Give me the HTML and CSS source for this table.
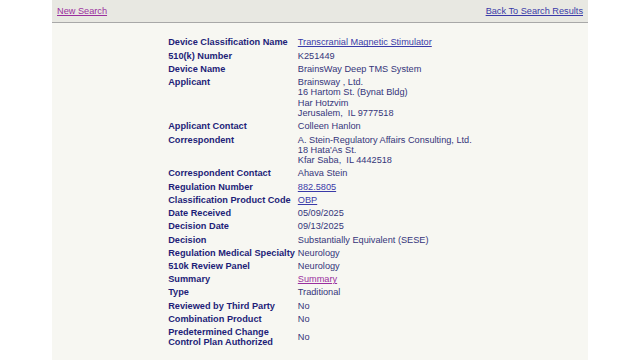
FILE: index.html
```html
<!DOCTYPE html>
<html lang="en">
<head>
  <meta charset="UTF-8" />
  <meta name="viewport" content="width=device-width, initial-scale=1.0"/>
  <title>510(k) Premarket Notification</title>
  <link rel="stylesheet" href="styles.css">
</head>
<body>
  <div class="page">
    <div class="topbar">
      <a class="visited" href="#">New Search</a>
      <a href="#">Back To Search Results</a>
    </div>

    <table class="details">
      <tr><th>Device Classification Name</th><td><a href="#">Transcranial Magnetic Stimulator</a></td></tr>
      <tr><th>510(k) Number</th><td>K251449</td></tr>
      <tr><th>Device Name</th><td>BrainsWay Deep TMS System</td></tr>
      <tr><th>Applicant</th><td>Brainsway , Ltd.<br>16 Hartom St. (Bynat Bldg)<br>Har Hotzvim<br>Jerusalem,&nbsp; IL 9777518</td></tr>
      <tr><th>Applicant Contact</th><td>Colleen Hanlon</td></tr>
      <tr><th>Correspondent</th><td>A. Stein-Regulatory Affairs Consulting, Ltd.<br>18 Hata'As St.<br>Kfar Saba,&nbsp; IL 4442518</td></tr>
      <tr><th>Correspondent Contact</th><td>Ahava Stein</td></tr>
      <tr><th>Regulation Number</th><td><a href="#">882.5805</a></td></tr>
      <tr><th>Classification Product Code</th><td><a href="#">OBP</a></td></tr>
      <tr><th>Date Received</th><td>05/09/2025</td></tr>
      <tr><th>Decision Date</th><td>09/13/2025</td></tr>
      <tr><th>Decision</th><td>Substantially Equivalent (SESE)</td></tr>
      <tr><th>Regulation Medical Specialty</th><td>Neurology</td></tr>
      <tr><th>510k Review Panel</th><td>Neurology</td></tr>
      <tr><th>Summary</th><td><a class="visited" href="#">Summary</a></td></tr>
      <tr><th>Type</th><td>Traditional</td></tr>
      <tr><th>Reviewed by Third Party</th><td>No</td></tr>
      <tr><th>Combination Product</th><td>No</td></tr>
      <tr class="middle"><th>Predetermined Change<br>Control Plan Authorized</th><td>No</td></tr>
    </table>
  </div>
</body>
</html>
```

FILE: styles.css
```css
body {
  margin: 0;
  background: #fff;
  font-family: "Liberation Sans", Arial, sans-serif;
  font-size: 9.2px;
}

.page {
  width: 536px;
  min-height: 100vh;
  margin: 0 auto;
  background: #f7f7f2;
}

.topbar {
  display: flex;
  justify-content: space-between;
  align-items: center;
  height: 22px;
  padding: 0 5px;
  background: #e8e8e2;
  border-bottom: 1px solid #a8a8a8;
}

a {
  color: #3a3aa8;
}

a.visited {
  color: #9a2f9e;
}

.details {
  margin: 13px auto 0;
  border-collapse: separate;
  border-spacing: 0;
}

.details th,
.details td {
  padding: 1.45px 2px 1.5px;
  vertical-align: top;
  text-align: left;
  line-height: 10.3px;
}

.details th {
  color: #1e1e78;
  font-weight: bold;
  white-space: nowrap;
  padding-right: 1px;
}

.details td {
  color: #35357a;
}

.details .middle th,
.details .middle td {
  vertical-align: middle;
}
```
